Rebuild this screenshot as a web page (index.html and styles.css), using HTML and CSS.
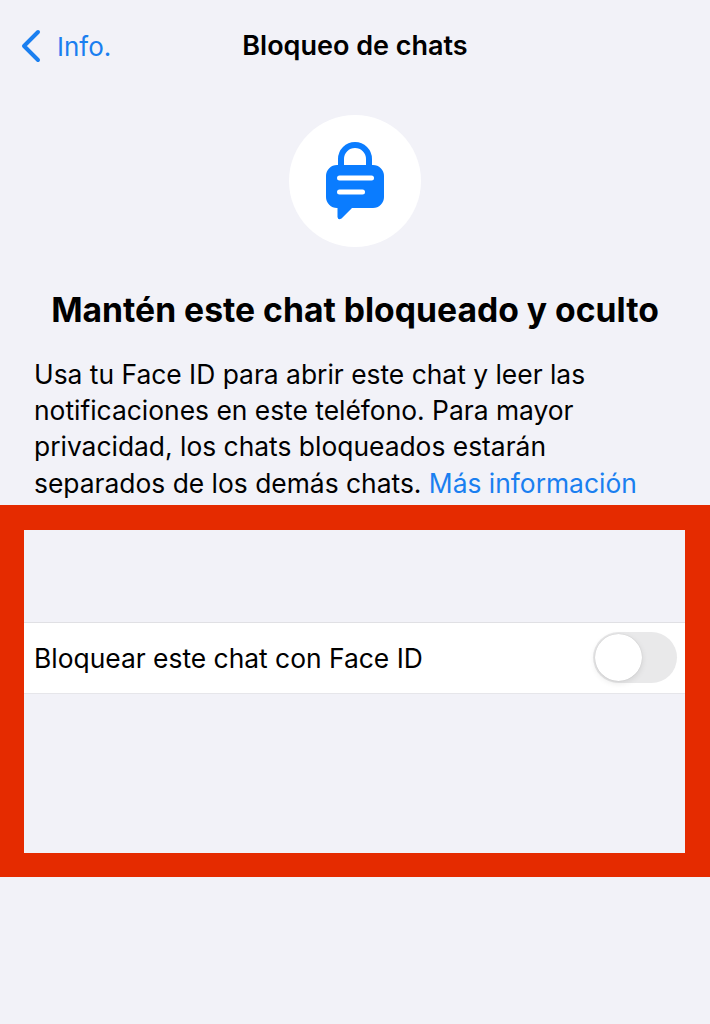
FILE: index.html
```html
<!DOCTYPE html>
<html lang="es">

<head>
  <meta charset="UTF-8">
  <meta name="viewport" content="width=device-width, initial-scale=1.0">
  <title>Bloqueo de chats</title>
  <link rel="stylesheet" href="styles.css">
</head>

<body>
  <div class="nav">
    <a class="back" href="#">
      <svg class="back-icon" width="22" height="34" viewBox="0 0 22 34">
        <path d="M18 3 L4 17 L18 31" fill="none" stroke="#1a7ff0" stroke-width="4" stroke-linecap="round" stroke-linejoin="round"/>
      </svg>
      <span>Info.</span>
    </a>
    <h1>Bloqueo de chats</h1>
  </div>

  <div class="badge">
    <svg width="60" height="78" viewBox="0 0 60 78">
      <path d="M16 26 V17 A14 14 0 0 1 44 17 V26" fill="none" stroke="#0a7cff" stroke-width="6"/>
      <path d="M12 23 H48 A11 11 0 0 1 59 34 V55 A11 11 0 0 1 48 66 H27 L16.500 76.500 Q13 78.500 12.500 75 V66 H12 A11 11 0 0 1 1 55 V34 A11 11 0 0 1 12 23 Z" fill="#0a7cff"/>
      <rect x="12" y="33.500" width="37" height="5" rx="2.500" fill="#fff"/>
      <rect x="12" y="47.500" width="28" height="5" rx="2.500" fill="#fff"/>
    </svg>
  </div>

  <h2 class="heading">Mantén este chat bloqueado y oculto</h2>

  <p class="intro">Usa tu Face ID para abrir este chat y leer las notificaciones en este teléfono. Para mayor privacidad, los chats bloqueados estarán separados de los demás chats. <a href="#">Más información</a></p>

  <div class="highlight">
    <div class="row">
      <span>Bloquear este chat con Face ID</span>
      <div class="toggle">
        <div class="knob"></div>
      </div>
    </div>
  </div>
</body>

</html>
```

FILE: styles.css
```css
body {
  font-family: Inter, "Noto Sans", sans-serif;
  margin: 0;
  padding: 0;
  height: 1024px;
  overflow: hidden;
  background-color: #f2f2f8;
  color: #000;
}

.nav {
  position: relative;
  height: 90px;
  display: flex;
  align-items: center;
  justify-content: center;
}

.nav h1 {
  margin: 0;
  font-size: 27px;
  font-weight: 600;
}

.back {
  position: absolute;
  left: 20px;
  top: 29px;
  display: flex;
  align-items: center;
  gap: 15px;
  color: #1a7ff0;
  font-size: 26px;
  text-decoration: none;
}

.badge {
  width: 132px;
  height: 132px;
  margin: 25px auto 0;
  border-radius: 50%;
  background-color: #fff;
  display: flex;
  align-items: center;
  justify-content: center;
}

.heading {
  margin: 43px 0 0;
  text-align: center;
  font-size: 33.700px;
  font-weight: 700;
  line-height: 40px;
}

.intro {
  margin: 26px 0 0;
  padding: 0 34px;
  font-size: 26.400px;
  line-height: 36.200px;
}

.intro a {
  color: #1a7ff0;
  text-decoration: none;
}

.highlight {
  box-sizing: border-box;
  height: 372px;
  margin-top: 4px;
  padding-top: 92px;
  border-style: solid;
  border-color: #e52b00;
  border-width: 25px 25px 24px 24px;
}

.row {
  box-sizing: border-box;
  height: 72px;
  padding: 0 8px 0 10px;
  display: flex;
  align-items: center;
  justify-content: space-between;
  background-color: #fff;
  border-top: 1px solid #e0e0e4;
  border-bottom: 1px solid #e6e6ea;
  font-size: 26.400px;
}

.toggle {
  width: 84px;
  height: 51px;
  border-radius: 26px;
  background-color: #e9e9ea;
  position: relative;
}

.knob {
  position: absolute;
  left: 2px;
  top: 2px;
  width: 47px;
  height: 47px;
  border-radius: 50%;
  background-color: #fff;
  box-shadow: 0 2px 6px rgba(0, 0, 0, 0.1), 0 0 1px rgba(0, 0, 0, 0.2);
}
```
